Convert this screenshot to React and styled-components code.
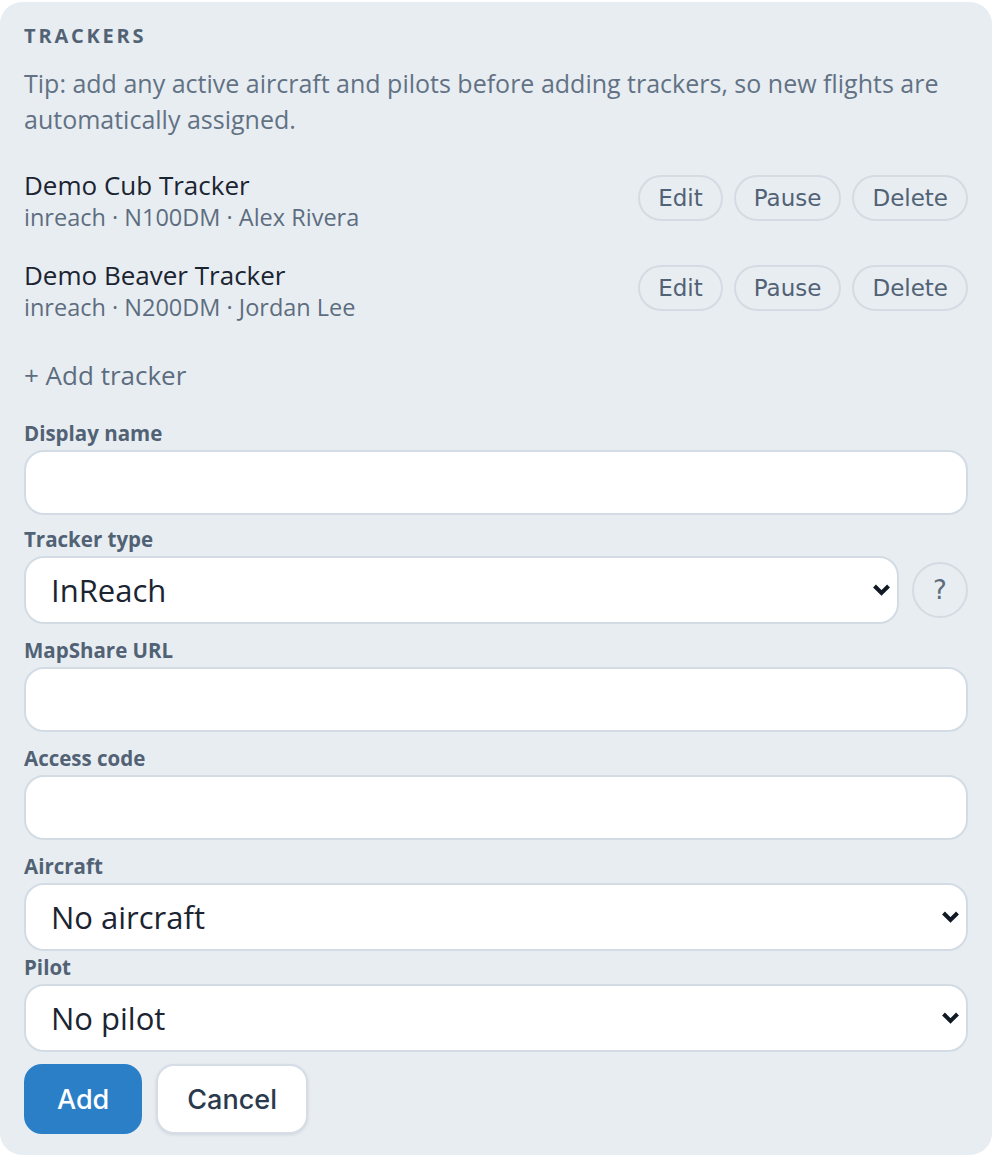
import React from "react";
import styled, { createGlobalStyle } from "styled-components";

const Global = createGlobalStyle`
  html, body { margin: 0; padding: 0; background: #ffffff; }
  body { font-family: "Open Sans", "Noto Sans", Arial, sans-serif; }
  * { box-sizing: border-box; }
`;

const Page = styled.div`
  padding-top: 2px;
`;

const Panel = styled.section`
  background: #e8edf2;
  border-radius: 22px;
  padding: 22px 24px 21px;
  display: flex;
  flex-direction: column;
`;

const Heading = styled.h2`
  margin: 0;
  font-size: 20px;
  line-height: 24px;
  font-weight: 700;
  letter-spacing: 2.8px;
  color: #526275;
  text-transform: uppercase;
`;

const Tip = styled.p`
  margin: 17px 0 0;
  font-size: 25px;
  line-height: 36px;
  color: #627284;
`;

const List = styled.div`
  margin-top: 32px;
  display: flex;
  flex-direction: column;
  gap: 26px;
`;

const Row = styled.div`
  display: flex;
  align-items: flex-start;
  justify-content: space-between;
`;

const Info = styled.div`
  display: flex;
  flex-direction: column;
`;

const Name = styled.div`
  font-size: 26px;
  line-height: 32px;
  color: #1b2431;
`;

const Meta = styled.div`
  font-size: 23.5px;
  line-height: 32px;
  color: #5d6d7f;
`;

const Actions = styled.div`
  margin-top: 6px;
  display: flex;
  gap: 11px;
`;

const Pill = styled.button`
  height: 46px;
  padding: 0 18px;
  border: 2px solid #d4dbe3;
  border-radius: 23px;
  background: transparent;
  font-family: "DejaVu Sans", sans-serif;
  font-size: 23px;
  color: #526275;
  cursor: pointer;
`;

const AddLink = styled.button`
  margin-top: 34px;
  align-self: flex-start;
  padding: 0;
  border: 0;
  background: none;
  font-family: inherit;
  font-size: 26px;
  line-height: 36px;
  color: #5d6d7f;
  cursor: pointer;
`;

const Field = styled.div`
  margin-top: ${(p) => p.$mt}px;
  display: flex;
  flex-direction: column;
  gap: 5px;
`;

const Label = styled.label`
  font-size: 20.5px;
  line-height: 24px;
  font-weight: 700;
  color: #526275;
`;

const Input = styled.input`
  height: 65px;
  width: 100%;
  border: 2px solid #d3dbe4;
  border-radius: 20px;
  background: #ffffff;
  padding: 0 24px;
  font-family: inherit;
  font-size: 32px;
  color: #1b2431;
  outline: none;
`;

const SelectWrap = styled.div`
  position: relative;
  flex: 1 1 auto;
  min-width: 0;
`;

const Select = styled.select`
  appearance: none;
  -webkit-appearance: none;
  display: block;
  height: 68px;
  width: 100%;
  border: 2px solid #d3dbe4;
  border-radius: 20px;
  background-color: #ffffff;
  padding: 0 40px 0 25px;
  font-family: inherit;
  font-size: 31px;
  color: #1b2431;
  outline: none;
`;

const Chevron = styled.svg`
  position: absolute;
  right: 8px;
  top: 50%;
  width: 19px;
  height: 13px;
  transform: translateY(-50%);
  pointer-events: none;
`;

const SelectRow = styled.div`
  display: flex;
  align-items: center;
  gap: 13px;
`;

const Help = styled.button`
  flex: none;
  width: 56px;
  height: 56px;
  border-radius: 50%;
  border: 2px solid #d4dbe3;
  background: transparent;
  font-family: "DejaVu Sans", sans-serif;
  font-size: 26px;
  color: #5d6d7f;
  padding: 0;
  cursor: pointer;
`;

const Buttons = styled.div`
  margin-top: 12px;
  display: flex;
  gap: 14px;
`;

const FormButton = styled.button`
  height: 70px;
  padding: 0 ${(p) => (p.$primary ? 31 : 29)}px;
  border-radius: 18px;
  border: 2px solid ${(p) => (p.$primary ? "#2b7fc7" : "#d6dde5")};
  background: ${(p) => (p.$primary ? "#2b7fc7" : "#ffffff")};
  color: ${(p) => (p.$primary ? "#ffffff" : "#2a3a4c")};
  box-shadow: ${(p) => (p.$primary ? "none" : "0 1px 3px rgba(30, 50, 80, 0.12)")};
  font-family: Inter, "DejaVu Sans", sans-serif;
  font-weight: 500;
  font-size: 27px;
  cursor: pointer;
`;

const trackers = [
  { name: "Demo Cub Tracker", meta: "inreach · N100DM · Alex Rivera" },
  { name: "Demo Beaver Tracker", meta: "inreach · N200DM · Jordan Lee" },
];

function Dropdown({ children, defaultValue }) {
  return (
    <SelectWrap>
      <Select defaultValue={defaultValue}>{children}</Select>
      <Chevron viewBox="0 0 19 13" aria-hidden="true">
        <polyline
          points="2.5,2.5 9.5,9.5 16.5,2.5"
          fill="none"
          stroke="#111a24"
          strokeWidth="4"
          strokeLinecap="butt"
          strokeLinejoin="miter"
        />
      </Chevron>
    </SelectWrap>
  );
}

export default function App() {
  return (
    <Page>
      <Global />
      <Panel>
        <Heading>Trackers</Heading>
        <Tip>
          Tip: add any active aircraft and pilots before adding trackers, so new flights are
          automatically assigned.
        </Tip>
        <List>
          {trackers.map((t) => (
            <Row key={t.name}>
              <Info>
                <Name>{t.name}</Name>
                <Meta>{t.meta}</Meta>
              </Info>
              <Actions>
                <Pill>Edit</Pill>
                <Pill>Pause</Pill>
                <Pill>Delete</Pill>
              </Actions>
            </Row>
          ))}
        </List>
        <AddLink>+ Add tracker</AddLink>

        <Field $mt={28}>
          <Label>Display name</Label>
          <Input />
        </Field>
        <Field $mt={12}>
          <Label>Tracker type</Label>
          <SelectRow>
            <Dropdown defaultValue="inreach">
              <option value="inreach">InReach</option>
              <option value="spot">SPOT</option>
            </Dropdown>
            <Help>?</Help>
          </SelectRow>
        </Field>
        <Field $mt={14}>
          <Label>MapShare URL</Label>
          <Input />
        </Field>
        <Field $mt={14}>
          <Label>Access code</Label>
          <Input />
        </Field>
        <Field $mt={14}>
          <Label>Aircraft</Label>
          <Dropdown defaultValue="">
            <option value="">No aircraft</option>
          </Dropdown>
        </Field>
        <Field $mt={4}>
          <Label>Pilot</Label>
          <Dropdown defaultValue="">
            <option value="">No pilot</option>
          </Dropdown>
        </Field>
        <Buttons>
          <FormButton $primary>Add</FormButton>
          <FormButton>Cancel</FormButton>
        </Buttons>
      </Panel>
    </Page>
  );
}
